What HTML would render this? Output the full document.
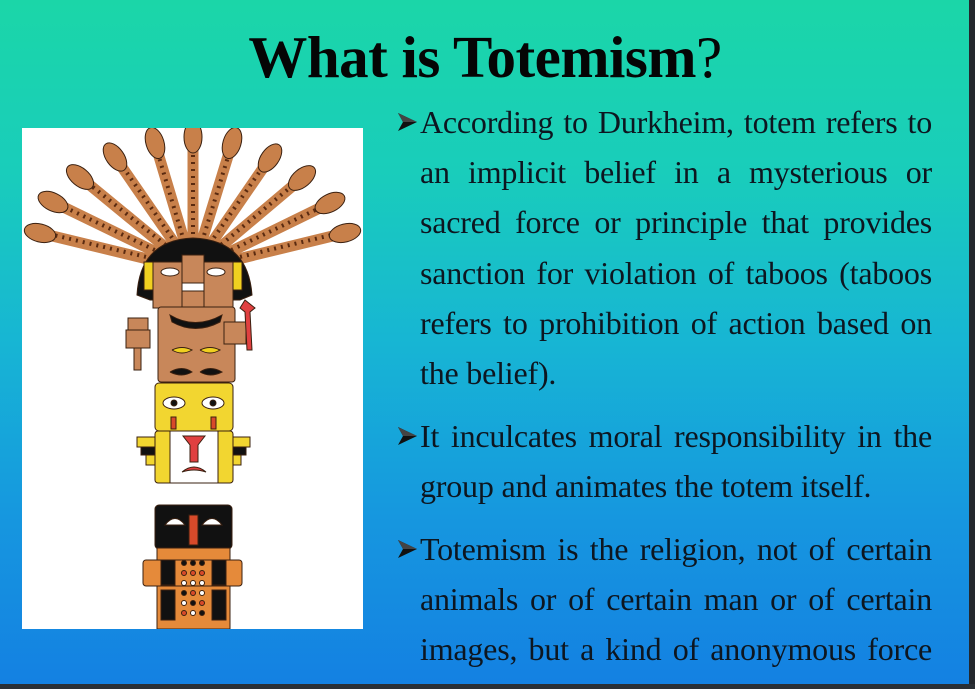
<!DOCTYPE html>
<html><head><meta charset="utf-8"><style>
html,body{margin:0;padding:0}
body{width:975px;height:689px;overflow:hidden;position:relative;background:linear-gradient(180deg,#1bd6a8 0%,#19cdbb 25%,#17b5d4 50%,#1697df 75%,#1480e2 100%);font-family:"Liberation Serif",serif;color:#0d1620}
.bar{position:absolute;left:0;right:0;bottom:0;height:5px;background:#2a2f35}
.edge{position:absolute;top:0;right:0;width:6px;height:689px;background:#23272d}
h1{position:absolute;top:23px;left:0;width:970px;text-align:center;margin:0;font-size:59px;font-weight:bold;letter-spacing:-0.5px;color:#050505}
h1 span{font-weight:normal}
.t{position:absolute;left:420px;width:512px;font-size:32px;line-height:50.2px;letter-spacing:-0.2px}
.l{display:block;text-align:justify;text-align-last:justify;white-space:nowrap;height:50.2px}
.n{text-align-last:left}
.b{position:absolute;left:-23px;top:15px;width:21px;height:20px}
.img{position:absolute;left:22px;top:128px;width:341px;height:501px;background:#fff}
</style></head><body>
<h1>What is Totemism<span>?</span></h1>
<div class="img">
<svg width="341" height="501" viewBox="22 128 341 501">
<g stroke="#3a2010" stroke-width="1">
<g stroke-linecap="round">
<line x1="193" y1="270" x2="40" y2="233" stroke="#c8804a" stroke-width="11"/>
<line x1="193" y1="270" x2="53" y2="202" stroke="#c8804a" stroke-width="11"/>
<line x1="193" y1="270" x2="80" y2="177" stroke="#c8804a" stroke-width="11"/>
<line x1="193" y1="270" x2="115" y2="157" stroke="#c8804a" stroke-width="11"/>
<line x1="193" y1="270" x2="155" y2="143" stroke="#c8804a" stroke-width="11"/>
<line x1="193" y1="270" x2="193" y2="137" stroke="#c8804a" stroke-width="11"/>
<line x1="193" y1="270" x2="232" y2="143" stroke="#c8804a" stroke-width="11"/>
<line x1="193" y1="270" x2="270" y2="158" stroke="#c8804a" stroke-width="11"/>
<line x1="193" y1="270" x2="302" y2="178" stroke="#c8804a" stroke-width="11"/>
<line x1="193" y1="270" x2="330" y2="203" stroke="#c8804a" stroke-width="11"/>
<line x1="193" y1="270" x2="345" y2="233" stroke="#c8804a" stroke-width="11"/>
</g>
<g stroke="#5a2a10" stroke-width="4" stroke-dasharray="2 5" fill="none">
<line x1="180" y1="265" x2="45" y2="233"/><line x1="180" y1="262" x2="58" y2="204"/><line x1="182" y1="258" x2="84" y2="180"/><line x1="184" y1="255" x2="118" y2="160"/><line x1="188" y1="255" x2="156" y2="147"/><line x1="193" y1="255" x2="193" y2="142"/><line x1="198" y1="255" x2="231" y2="147"/><line x1="202" y1="255" x2="267" y2="161"/><line x1="205" y1="258" x2="298" y2="181"/><line x1="206" y1="262" x2="326" y2="205"/><line x1="206" y1="265" x2="340" y2="233"/>
</g>
<g fill="#c8804a">
<ellipse cx="40" cy="233" rx="16" ry="9" transform="rotate(14 40 233)"/>
<ellipse cx="53" cy="202" rx="16" ry="9" transform="rotate(26 53 202)"/>
<ellipse cx="80" cy="177" rx="16" ry="9" transform="rotate(40 80 177)"/>
<ellipse cx="115" cy="157" rx="16" ry="9" transform="rotate(55 115 157)"/>
<ellipse cx="155" cy="143" rx="16" ry="9" transform="rotate(73 155 143)"/>
<ellipse cx="193" cy="137" rx="16" ry="9" transform="rotate(90 193 137)"/>
<ellipse cx="232" cy="143" rx="16" ry="9" transform="rotate(107 232 143)"/>
<ellipse cx="270" cy="158" rx="16" ry="9" transform="rotate(125 270 158)"/>
<ellipse cx="302" cy="178" rx="16" ry="9" transform="rotate(140 302 178)"/>
<ellipse cx="330" cy="203" rx="16" ry="9" transform="rotate(154 330 203)"/>
<ellipse cx="345" cy="233" rx="16" ry="9" transform="rotate(166 345 233)"/>
</g>
<path d="M137 295 Q140 240 193 238 Q248 240 252 295 L240 300 L150 300 Z" fill="#111"/>
<rect x="144" y="262" width="9" height="28" fill="#f0d020"/><rect x="233" y="262" width="9" height="28" fill="#f0d020"/>
<rect x="153" y="262" width="80" height="46" fill="#c8875a"/>
<rect x="182" y="255" width="22" height="55" fill="#c8875a"/>
<rect x="182" y="283" width="22" height="8" fill="#fff"/>
<ellipse cx="170" cy="272" rx="9" ry="4" fill="#fff"/><ellipse cx="216" cy="272" rx="9" ry="4" fill="#fff"/>
<rect x="128" y="318" width="20" height="12" fill="#c8875a"/><rect x="134" y="330" width="7" height="40" fill="#c8875a"/>
<rect x="126" y="330" width="24" height="18" fill="#c8875a"/>
<rect x="158" y="307" width="77" height="75" rx="3" fill="#c8875a"/>
<path d="M170 315 Q195 330 222 315 L220 322 Q195 335 172 322Z" fill="#111"/>
<rect x="224" y="322" width="22" height="22" fill="#c8875a"/>
<path d="M245 300 L255 308 L250 312 L252 350 L247 350 L245 312 L240 308Z" fill="#e04040"/>
<path d="M172 350 Q182 345 192 350 Q182 356 172 350 M200 350 Q210 345 220 350 Q210 356 200 350" fill="#f0d020"/>
<path d="M170 372 Q182 365 192 372 Q182 378 170 372 M200 372 Q210 365 222 372 Q210 378 200 372" fill="#111"/>
<rect x="155" y="383" width="78" height="48" rx="4" fill="#f2d630"/>
<ellipse cx="174" cy="403" rx="11" ry="6" fill="#fff"/><ellipse cx="213" cy="403" rx="11" ry="6" fill="#fff"/>
<circle cx="174" cy="403" r="3" fill="#111"/><circle cx="213" cy="403" r="3" fill="#111"/>
<rect x="171" y="417" width="5" height="12" fill="#d84a2a"/><rect x="211" y="417" width="5" height="12" fill="#d84a2a"/>
<rect x="137" y="437" width="113" height="10" fill="#f2d630"/>
<rect x="141" y="447" width="105" height="8" fill="#111"/>
<rect x="146" y="455" width="95" height="10" fill="#f2d630"/>
<rect x="155" y="431" width="78" height="52" rx="3" fill="#f2d630"/>
<rect x="170" y="431" width="48" height="52" fill="#fff"/>
<path d="M183 436 L205 436 L198 445 L198 462 L190 462 L190 445Z" fill="#e04040"/>
<path d="M182 472 Q194 462 206 472 Q194 468 182 472" fill="#e04040"/>
<rect x="155" y="505" width="77" height="44" rx="4" fill="#111"/>
<path d="M165 525 Q175 512 185 525Z M202 525 Q212 512 222 525Z" fill="#fff"/>
<rect x="189" y="515" width="9" height="30" fill="#d84a2a"/>
<rect x="157" y="548" width="73" height="81" fill="#e58a3a"/>
<rect x="143" y="560" width="99" height="26" rx="3" fill="#e58a3a"/>
<rect x="161" y="560" width="14" height="25" fill="#111"/><rect x="212" y="560" width="14" height="25" fill="#111"/>
<rect x="161" y="590" width="14" height="30" fill="#111"/><rect x="212" y="590" width="14" height="30" fill="#111"/>
<g fill="#111"><circle cx="184" cy="563" r="2.5"/><circle cx="193" cy="563" r="2.5"/><circle cx="202" cy="563" r="2.5"/>
<circle cx="184" cy="573" r="2.5" fill="#d84a2a"/><circle cx="193" cy="573" r="2.5" fill="#d84a2a"/><circle cx="202" cy="573" r="2.5" fill="#d84a2a"/>
<circle cx="184" cy="583" r="2.5" fill="#fff"/><circle cx="193" cy="583" r="2.5" fill="#fff"/><circle cx="202" cy="583" r="2.5" fill="#fff"/>
<circle cx="184" cy="593" r="2.5"/><circle cx="193" cy="593" r="2.5" fill="#d84a2a"/><circle cx="202" cy="593" r="2.5" fill="#fff"/>
<circle cx="184" cy="603" r="2.5" fill="#fff"/><circle cx="193" cy="603" r="2.5"/><circle cx="202" cy="603" r="2.5" fill="#d84a2a"/>
<circle cx="184" cy="613" r="2.5" fill="#d84a2a"/><circle cx="193" cy="613" r="2.5" fill="#fff"/><circle cx="202" cy="613" r="2.5"/></g>
</g>
</svg>
</div>
<div class="t" style="top:97px"><svg class="b" viewBox="0 0 21 20"><path d="M1 1 L20 10 L1 19 L6 10 Z" fill="#111"/><path d="M1 1 L20 10 L6 10 Z" fill="#444"/></svg>
<div class="l">According to Durkheim, totem refers to</div>
<div class="l">an implicit belief in a mysterious or</div>
<div class="l">sacred force or principle that provides</div>
<div class="l">sanction for violation of taboos (taboos</div>
<div class="l">refers to prohibition of action based on</div>
<div class="l n">the belief).</div>
</div>
<div class="t" style="top:411px"><svg class="b" viewBox="0 0 21 20"><path d="M1 1 L20 10 L1 19 L6 10 Z" fill="#111"/><path d="M1 1 L20 10 L6 10 Z" fill="#444"/></svg>
<div class="l">It inculcates moral responsibility in the</div>
<div class="l n">group and animates the totem itself.</div>
</div>
<div class="t" style="top:524px"><svg class="b" viewBox="0 0 21 20"><path d="M1 1 L20 10 L1 19 L6 10 Z" fill="#111"/><path d="M1 1 L20 10 L6 10 Z" fill="#444"/></svg>
<div class="l">Totemism is the religion, not of certain</div>
<div class="l">animals or of certain man or of certain</div>
<div class="l">images, but a kind of anonymous force</div>
</div>
<div class="edge"></div>
<div class="bar"></div>
</body></html>
